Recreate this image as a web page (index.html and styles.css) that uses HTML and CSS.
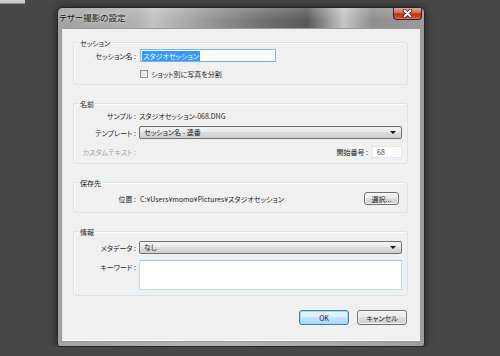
FILE: index.html
```html
<!DOCTYPE html>
<html lang="ja">
<head>
    <meta charset="UTF-8">
    <title>テザー撮影の設定</title>
    <link rel="stylesheet" href="styles.css">
</head>
<body>
    <div class="behind"></div>

    <div class="dialog">
        <div class="titlebar">
            <span class="title">テザー撮影の設定</span>
            <div class="close">
                <svg width="11" height="9" viewBox="0 0 11 9">
                    <path d="M2.5 1.5 L8.5 7.5 M8.5 1.5 L2.5 7.5" stroke="#3a2a28" stroke-width="3.4" stroke-linecap="round"/>
                    <path d="M2.5 1.5 L8.5 7.5 M8.5 1.5 L2.5 7.5" stroke="#fff" stroke-width="1.8" stroke-linecap="round"/>
                </svg>
            </div>
        </div>

        <div class="client">
            <div class="group first">
                <div class="legend">セッション</div>
                <div class="row">
                    <span class="label">セッション名 :</span>
                    <div class="textbox focused"><span class="selected">スタジオセッション</span></div>
                </div>
                <div class="row check-row">
                    <span></span>
                    <label class="check"><span class="box"></span>ショット別に写真を分割</label>
                </div>
            </div>

            <div class="group">
                <div class="legend">名前</div>
                <div class="row sample-row">
                    <span class="label">サンプル :</span>
                    <span class="value">スタジオセッション-068.DNG</span>
                </div>
                <div class="row select-row">
                    <span class="label">テンプレート :</span>
                    <div class="dropdown">セッション名 - 連番<span class="arrow"></span></div>
                </div>
                <div class="row custom-row">
                    <span class="label disabled">カスタムテキスト :</span>
                    <div class="start">
                        <span>開始番号 :</span>
                        <div class="numbox">68</div>
                    </div>
                </div>
            </div>

            <div class="group">
                <div class="legend">保存先</div>
                <div class="row path-row">
                    <span class="label">位置 :</span>
                    <div class="path">
                        <span class="value">C:¥Users¥momo¥Pictures¥スタジオセッション</span>
                        <button class="btn choose">選択...</button>
                    </div>
                </div>
            </div>

            <div class="group">
                <div class="legend">情報</div>
                <div class="row meta-row">
                    <span class="label">メタデータ :</span>
                    <div class="dropdown">なし<span class="arrow"></span></div>
                </div>
                <div class="row keyword-row">
                    <span class="label">キーワード :</span>
                    <div class="keywords"></div>
                </div>
            </div>

            <div class="actions">
                <button class="btn ok">OK</button>
                <button class="btn cancel">キャンセル</button>
            </div>
        </div>
    </div>
</body>
</html>
```

FILE: styles.css
```css
body {
    margin: 0;
    background: #474747;
    font-family: "Noto Sans CJK JP", "Noto Sans", sans-serif;
    font-size: 7px;
    font-feature-settings: "palt";
    color: #1e1e1e;
}

.behind {
    position: absolute;
    top: 0;
    left: 0;
    width: 25px;
    height: 3px;
    background: #cfcfcf;
    border-bottom: 1px solid #8c8c8c;
}

.dialog {
    margin: 7px 0 0 57px;
    width: 368px;
    height: 340px;
    box-sizing: border-box;
    border: 1px solid #262626;
    border-radius: 6px 6px 3px 3px;
    background: linear-gradient(90deg, #a2a2a2, #b4b4b4 40%, #a8a8a8 80%, #9c9c9c);
    box-shadow: 0 0 9px rgba(0, 0, 0, 0.55);
    display: flex;
    flex-direction: column;
}

.titlebar {
    height: 20px;
    display: flex;
    justify-content: space-between;
    align-items: flex-start;
    border-radius: 5px 5px 0 0;
    background:
        linear-gradient(rgba(255, 255, 255, 0.18), rgba(255, 255, 255, 0) 60%),
        linear-gradient(90deg, #a0a0a0 0, #b2b2b2 22%, #c2c2c2 26%, #8c8c8c 45%, #6c6c6c 58%, #595959 68%, #9a9a9a 74%, #c6c6c6 78%, #8e8e8e 86%, #9c9c9c 100%);
}

.title {
    padding: 3px 0 0 1px;
    font-size: 8.5px;
    line-height: 12px;
    color: #1a1a1a;
    text-shadow: 0 0 4px rgba(255, 255, 255, 0.9);
}

.close {
    margin-right: 2px;
    width: 29px;
    height: 12px;
    box-sizing: border-box;
    border: 1px solid #4e1c14;
    border-top: none;
    border-radius: 0 0 4px 4px;
    background: linear-gradient(#e6a594, #d56f58 40%, #b8321a 55%, #c9462a 80%, #dc7454);
    display: flex;
    justify-content: center;
    align-items: center;
}

.client {
    flex: 1;
    margin: 0 3px 4px;
    background: #f0f0f0;
    border: 1px solid #9a9a9a;
    box-shadow: inset 0 -1px 0 #fff;
    display: flex;
    flex-direction: column;
}

.group {
    margin: 17px 12px 0 11px;
    padding: 0 5px 5px 0;
    border: 1px solid #dde3e8;
    border-radius: 3px;
    box-shadow: inset 1px 1px 0 #fafcfd;
}

.group.first {
    margin-top: 13px;
}

.group + .group {
    margin-top: 18px;
}

.legend {
    margin: -5px 0 0 5px;
    padding: 0 1px;
    width: max-content;
    line-height: 11px;
    background: #f0f0f0;
}

.row {
    display: grid;
    grid-template-columns: 62px 1fr;
    column-gap: 3px;
    align-items: center;
}

.label {
    text-align: right;
    line-height: 10px;
    white-space: nowrap;
}

.label.disabled {
    color: #a3a3a3;
}

.value {
    line-height: 10px;
    white-space: nowrap;
}

.textbox {
    margin-left: 1px;
    width: 136px;
    height: 13px;
    box-sizing: border-box;
    background: #fff;
    border: 1px solid #abadb3;
    padding: 1px 1px 0;
    line-height: 10px;
}

.textbox.focused {
    border-color: #7eb4ea;
}

.selected {
    background: #3399ff;
    color: #fff;
    display: inline-block;
    height: 10px;
    padding: 0 1px;
}

.check-row {
    margin-top: 7px;
}

.check {
    margin-left: 1px;
    display: flex;
    align-items: center;
    gap: 3px;
    line-height: 10px;
}

.box {
    width: 8px;
    height: 8px;
    box-sizing: border-box;
    border: 1px solid #8e8f8f;
    background: linear-gradient(135deg, #dcdcdc, #fbfbfb);
}

.sample-row {
    margin-top: 1px;
}

.select-row {
    margin-top: 5px;
}

.dropdown {
    position: relative;
    height: 13px;
    box-sizing: border-box;
    border: 1px solid #707070;
    border-radius: 2px;
    background: linear-gradient(#f3f3f3, #ebebeb 45%, #dddddd 50%, #cfcfcf);
    padding: 0 0 0 4px;
    line-height: 11px;
}

.arrow {
    position: absolute;
    right: 5px;
    top: 4px;
    border-left: 3px solid transparent;
    border-right: 3px solid transparent;
    border-top: 3px solid #1a1a1a;
}

.custom-row {
    margin-top: 7px;
}

.start {
    display: flex;
    justify-content: flex-end;
    align-items: center;
    gap: 4px;
}

.numbox {
    width: 30px;
    height: 12px;
    box-sizing: border-box;
    background: #fff;
    border: 1px solid #e2e6ea;
    padding-left: 4px;
    line-height: 10px;
    color: #3a3a50;
}

.path-row {
    margin-top: 3px;
    padding-bottom: 2px;
}

.path {
    display: flex;
    justify-content: space-between;
    align-items: center;
    padding-left: 1px;
}

.btn {
    font-family: inherit;
    font-size: 7px;
    font-feature-settings: "palt";
    color: #1e1e1e;
    margin: 0;
    padding: 0;
    box-sizing: border-box;
    border: 1px solid #707070;
    border-radius: 3px;
    background: linear-gradient(#f2f2f2, #ebebeb 45%, #dddddd 50%, #cfcfcf);
    box-shadow: inset 0 0 0 1px rgba(255, 255, 255, 0.7);
    line-height: 10px;
}

.choose {
    width: 35px;
    height: 13px;
    margin-right: 3px;
}

.meta-row {
    margin-top: 3px;
}

.keyword-row {
    margin-top: 6px;
    align-items: start;
}

.keyword-row .label {
    padding-top: 2px;
}

.keywords {
    height: 30px;
    box-sizing: border-box;
    background: #fff;
    border: 1px solid #c5d9ed;
    border-top-color: #a4c3e2;
}

.actions {
    margin-top: 14px;
    padding-right: 13px;
    display: flex;
    justify-content: flex-end;
    gap: 8px;
}

.actions .btn {
    height: 15px;
    width: 50px;
}

.ok {
    width: 49px;
    border-color: #3c7fb1;
    background: linear-gradient(#eaf6fd, #d9f0fc 45%, #bee6fd 50%, #a7d9f5);
    box-shadow: inset 0 0 0 1px #9ed9f5;
}
```
